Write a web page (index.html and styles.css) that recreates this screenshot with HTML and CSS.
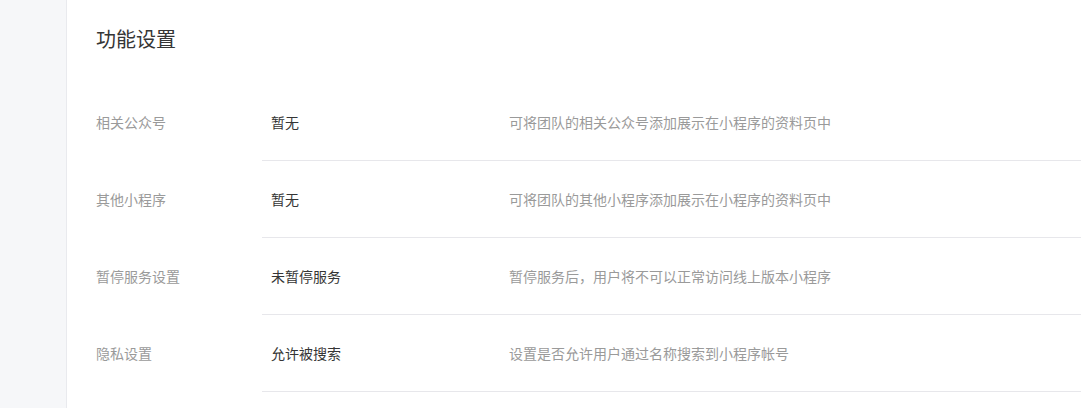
FILE: index.html
```html
<!DOCTYPE html>
<html lang="zh-CN">
<head>
<meta charset="utf-8">
<title>功能设置</title>
<link rel="stylesheet" href="styles.css">
</head>
<body>
<div class="layout">
  <aside class="sidebar"></aside>
  <main class="main">
    <h2 class="title">功能设置</h2>
    <div class="list">
      <div class="row">
        <div class="label">相关公众号</div>
        <div class="content">
          <div class="value">暂无</div>
          <div class="desc">可将团队的相关公众号添加展示在小程序的资料页中</div>
        </div>
      </div>
      <div class="row">
        <div class="label">其他小程序</div>
        <div class="content">
          <div class="value">暂无</div>
          <div class="desc">可将团队的其他小程序添加展示在小程序的资料页中</div>
        </div>
      </div>
      <div class="row">
        <div class="label">暂停服务设置</div>
        <div class="content">
          <div class="value">未暂停服务</div>
          <div class="desc">暂停服务后，用户将不可以正常访问线上版本小程序</div>
        </div>
      </div>
      <div class="row">
        <div class="label">隐私设置</div>
        <div class="content">
          <div class="value">允许被搜索</div>
          <div class="desc">设置是否允许用户通过名称搜索到小程序帐号</div>
        </div>
      </div>
    </div>
  </main>
</div>
</body>
</html>
```
FILE: styles.css
```css
html, body {
  margin: 0;
  padding: 0;
  background: #ffffff;
  font-family: "Noto Sans CJK SC", "Liberation Sans", sans-serif;
}
.layout {
  display: flex;
  min-height: 408px;
}
.sidebar {
  width: 66px;
  flex: none;
  background: #f6f7f9;
  border-right: 1px solid #e9eaee;
}
.main {
  flex: 1;
  padding-left: 29px;
}
.title {
  margin: 0;
  padding-top: 25px;
  height: 59px;
  font-size: 20px;
  line-height: 28px;
  font-weight: normal;
  color: #353535;
}
.list {
  display: flex;
  flex-direction: column;
}
.row {
  display: flex;
  height: 77px;
  font-size: 14px;
}
.label {
  width: 166px;
  flex: none;
  display: flex;
  align-items: center;
  color: #9a9a9a;
  padding-bottom: 1px;
}
.content {
  flex: 1;
  display: flex;
  align-items: center;
  border-bottom: 1px solid #e7e7eb;
}
.value {
  width: 238px;
  padding-left: 9px;
  flex: none;
  color: #353535;
}
.desc {
  color: #9a9a9a;
}
```
